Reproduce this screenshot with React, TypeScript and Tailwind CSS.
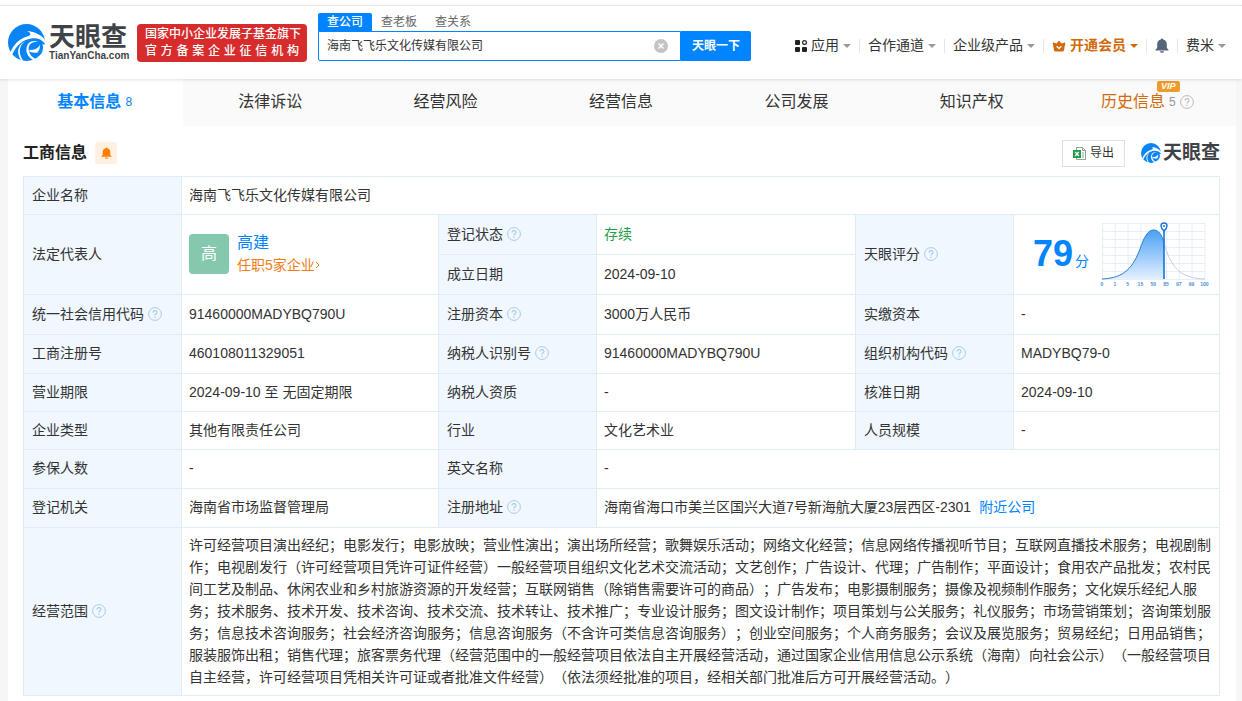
import type { ReactNode } from 'react'
import clsx from 'clsx'

interface NavItem {
  label: string
  icon?: ReactNode
  highlight?: boolean
  caret?: boolean
}

interface TabItem {
  label: string
  count?: number
  vip?: boolean
}

const SCOPE =
  '许可经营项目演出经纪；电影发行；电影放映；营业性演出；演出场所经营；歌舞娱乐活动；网络文化经营；信息网络传播视听节目；互联网直播技术服务；电视剧制作；电视剧发行（许可经营项目凭许可证件经营）一般经营项目组织文化艺术交流活动；文艺创作；广告设计、代理；广告制作；平面设计；食用农产品批发；农村民间工艺及制品、休闲农业和乡村旅游资源的开发经营；互联网销售（除销售需要许可的商品）；广告发布；电影摄制服务；摄像及视频制作服务；文化娱乐经纪人服务；技术服务、技术开发、技术咨询、技术交流、技术转让、技术推广；专业设计服务；图文设计制作；项目策划与公关服务；礼仪服务；市场营销策划；咨询策划服务；信息技术咨询服务；社会经济咨询服务；信息咨询服务（不含许可类信息咨询服务）；创业空间服务；个人商务服务；会议及展览服务；贸易经纪；日用品销售；服装服饰出租；销售代理；旅客票务代理（经营范围中的一般经营项目依法自主开展经营活动，通过国家企业信用信息公示系统（海南）向社会公示）（一般经营项目自主经营，许可经营项目凭相关许可证或者批准文件经营）（依法须经批准的项目，经相关部门批准后方可开展经营活动。）'

const tabs: TabItem[] = [
  { label: '基本信息', count: 8 },
  { label: '法律诉讼' },
  { label: '经营风险' },
  { label: '经营信息' },
  { label: '公司发展' },
  { label: '知识产权' },
  { label: '历史信息', count: 5, vip: true },
]

const Swirl = ({ className }: { className?: string }) => (
  <svg viewBox="0 0 112 112" className={className} aria-hidden="true">
    <circle cx="56" cy="56" r="56" fill="#0a84f5" />
    <path d="M6 88C18 58 38 42 62 36C74 30 64 24 58 22C76 22 98 30 114 50V64C106 48 92 42 74 43C44 46 24 66 11 96Z" fill="#fff" />
    <path d="M52 52C32 64 30 92 48 114L41 112C24 90 28 64 52 52Z" fill="#fff" />
    <path d="M92 54C70 52 60 64 63 80C66 95 76 103 88 107L80 111C62 102 54 88 56 74C58 56 72 46 92 54Z" fill="#fff" />
    <path d="M65 78C80 80 92 74 96 62L114 62L112 74C100 88 82 90 65 84Z" fill="#fff" />
    <path d="M90 53C104 56 110 68 104 80C98 86 94 86 88 86C97 80 100 66 90 53Z" fill="#0a84f5" />
  </svg>
)

const GridIcon = () => (
  <svg viewBox="0 0 12 12" className="size-3" aria-hidden="true">
    <rect x="0" y="0" width="5" height="5" rx="1" fill="#222" />
    <rect x="0" y="7" width="5" height="5" rx="1" fill="#222" />
    <rect x="7" y="7" width="5" height="5" rx="1" fill="#222" />
    <circle cx="9.5" cy="2.5" r="1.9" fill="none" stroke="#222" strokeWidth="1.2" />
  </svg>
)

const CrownIcon = () => (
  <svg viewBox="0 0 14 13" className="h-3 w-3.5" aria-hidden="true">
    <path
      d="M7 0.6L9.6 3.8L13.4 2.6Q14 2.6 13.8 3.4L12.4 11Q12.2 12.4 11 12.4H3Q1.8 12.4 1.6 11L0.2 3.4Q0 2.6 0.6 2.6L4.4 3.8Z"
      fill="#d26a0c"
    />
    <path d="M4.4 6.6L7 9.2L9.6 6.6" fill="none" stroke="#fff" strokeWidth="1.4" />
  </svg>
)

const BellIcon = ({ className }: { className?: string }) => (
  <svg viewBox="0 0 14 15" className={className} fill="currentColor" aria-hidden="true">
    <path d="M7 0.4C7.7 0.4 8.1 0.8 8.2 1.5C10.4 2 11.8 3.8 11.8 6.2V10L13.4 11.6V12.4H0.6V11.6L2.2 10V6.2C2.2 3.8 3.6 2 5.8 1.5C5.9 0.8 6.3 0.4 7 0.4Z" />
    <path d="M5 13.2H9C9 14.2 8 14.8 7 14.8S5 14.2 5 13.2Z" />
  </svg>
)

const HelpIcon = ({ className = 'text-[#a9cbe6]' }: { className?: string }) => (
  <svg viewBox="0 0 14 14" className={clsx('inline-block size-3.5 shrink-0', className)} aria-hidden="true">
    <circle cx="7" cy="7" r="6.4" fill="none" stroke="currentColor" />
    <path
      d="M5 5.6C5 4.3 5.9 3.6 7 3.6S9 4.3 9 5.4C9 6.7 7 6.8 7 8.4"
      fill="none"
      stroke="currentColor"
      strokeWidth="1.1"
    />
    <circle cx="7" cy="10.3" r="0.7" fill="currentColor" />
  </svg>
)

const ExcelIcon = () => (
  <svg viewBox="0 0 13 13" className="size-[13px]" aria-hidden="true">
    <path d="M3.5 0.5H9.5L12.5 3.5V12.5H3.5Z" fill="#fff" stroke="#8fa596" />
    <path d="M9.5 0.5V3.5H12.5M9 6H11M9 8H11M9 10H11" fill="none" stroke="#8fa596" />
    <rect x="0" y="3" width="8" height="8" fill="#1f9d4d" />
    <path d="M2.2 5L5.8 9M5.8 5L2.2 9" stroke="#fff" strokeWidth="1.2" />
  </svg>
)

const Caret = ({ className = 'border-t-[#999]' }: { className?: string }) => (
  <span className={clsx('border-x-4 border-t-4 border-x-transparent', className)} />
)

const ticks = ['0', '1', '5', '15', '50', '85', '97', '99', '100']

const ScoreChart = () => (
  <svg viewBox="0 0 110 66" className="h-[66px] w-[110px]" aria-hidden="true">
    <defs>
      <linearGradient id="scoreFill" x1="0" y1="0" x2="0" y2="1">
        <stop offset="0" stopColor="#4aa0f5" />
        <stop offset="1" stopColor="#e3f0ff" />
      </linearGradient>
    </defs>
    {Array.from({ length: 9 }, (_, i) => (
      <path key={`v${i}`} d={`M${3.5 + i * 12.8} 2V58`} stroke="#e6eef8" />
    ))}
    {Array.from({ length: 8 }, (_, i) => (
      <path key={`h${i}`} d={`M3 ${2.5 + i * 8}H106`} stroke="#e6eef8" />
    ))}
    <path d="M3 58C26 57 34 46 41 28C45 16 49 9 54.500 9C60 9 63 14 65 22V58Z" fill="url(#scoreFill)" />
    <path d="M3 58C26 57 34 46 41 28C45 16 49 9 54.500 9C60 9 63 14 65 22" fill="none" stroke="#2b7fd0" />
    <path d="M65 22C72 46 80 57 106 58" fill="none" stroke="#c6cdd6" />
    <path d="M65 8V58" stroke="#1673d8" strokeWidth="1.6" />
    <path d="M65 10C62.500 7.600 62 6.500 62 5A3 3 0 0 1 68 5C68 6.500 67.500 7.600 65 10Z" fill="#fff" stroke="#1673d8" strokeWidth="1.4" />
    <circle cx="65" cy="5" r="1" fill="#1673d8" />
    {ticks.map((t, i) => (
      <text
        key={t}
        x={3 + i * 12.8}
        y="65"
        textAnchor="middle"
        fontSize="5"
        fontWeight="700"
        fontFamily="Liberation Sans"
        fill="#4d8fd6"
      >
        {t}
      </text>
    ))}
  </svg>
)

const navItems: NavItem[] = [
  { label: '应用', icon: <GridIcon />, caret: true },
  { label: '合作通道', caret: true },
  { label: '企业级产品', caret: true },
  { label: '开通会员', icon: <CrownIcon />, highlight: true, caret: true },
]

const Divider = () => <span className="h-3.5 w-px bg-[#e6e6e6]" />

const Header = () => (
  <header className="relative z-10 flex h-[74px] items-center border-t border-[#e3e3e3] bg-white pr-4 pl-2 shadow-[0_1px_3px_rgba(0,0,0,0.12)]">
    <a href="#home" className="flex shrink-0 items-center gap-1">
      <Swirl className="size-[37px]" />
      <span className="flex w-20 flex-col">
        <span className="text-[26px] leading-[26px] font-bold text-[#3f4347]">天眼查</span>
        <span className="text-[10px] leading-3 font-bold text-[#3f4347]">TianYanCha.com</span>
      </span>
    </a>
    <div className="ml-2 flex h-[38px] w-[170px] shrink-0 flex-col justify-center rounded-sm bg-[#d62c2c] px-2 text-[12px] leading-[17px] font-medium whitespace-nowrap text-white">
      <span className="text-center">国家中小企业发展子基金旗下</span>
      <span className="flex justify-between">
        {[...'官方备案企业征信机构'].map((c) => (
          <span key={c}>{c}</span>
        ))}
      </span>
    </div>
    <form className="ml-[11px] w-[433px] shrink-0 pb-[11px]" onSubmit={(e) => e.preventDefault()}>
      <div className="flex h-[18px] text-[12px] leading-[18px] text-[#666]">
        <button type="button" className="w-[54px] rounded-t-xs bg-[#0084ff] font-medium text-white">
          查公司
        </button>
        <button type="button" className="w-[54px]">查老板</button>
        <button type="button" className="w-[54px]">查关系</button>
      </div>
      <div className="flex h-[30px]">
        <div className="flex flex-1 items-center rounded-bl-xs border border-[#0084ff] pr-3 pl-2">
          <input
            aria-label="搜索公司"
            defaultValue="海南飞飞乐文化传媒有限公司"
            className="min-w-0 flex-1 text-[12px] text-[#333] outline-none"
          />
          <button type="button" aria-label="清空">
            <svg viewBox="0 0 14 14" className="size-3.5">
              <circle cx="7" cy="7" r="7" fill="#c4c4c4" />
              <path d="M4.500 4.500L9.500 9.500M9.500 4.500L4.500 9.500" stroke="#fff" strokeWidth="1.4" />
            </svg>
          </button>
        </div>
        <button type="submit" className="w-[70px] rounded-r-xs bg-[#0084ff] text-[12px] font-bold text-white">
          天眼一下
        </button>
      </div>
    </form>
    <nav className="ml-auto flex items-center gap-2 pt-1.5 text-[14px] text-[#333]">
      {navItems.map((item) => (
        <div key={item.label} className="flex items-center gap-2">
          <a
            href="#nav"
            className={clsx('flex items-center gap-1 whitespace-nowrap', item.highlight && 'font-bold text-[#d26a0c]')}
          >
            {item.icon}
            {item.label}
            {item.caret && <Caret className={item.highlight ? 'border-t-[#d26a0c]' : 'border-t-[#999]'} />}
          </a>
          <Divider />
        </div>
      ))}
      <button type="button" aria-label="消息" className="text-[#55657a]">
        <BellIcon className="h-[15px] w-3.5" />
      </button>
      <Divider />
      <a href="#user" className="flex items-center gap-1 whitespace-nowrap">
        费米
        <Caret />
      </a>
    </nav>
  </header>
)

const Tabs = () => (
  <nav className="flex h-[47px] bg-[#fafafa]">
    {tabs.map((tab, i) => (
      <a
        key={tab.label}
        href="#tab"
        className={clsx(
          'flex flex-1 items-center justify-center gap-1 pr-0.5 pb-0.5 text-[16px]',
          i === 0 ? 'bg-white font-bold text-[#0084ff]' : 'text-[#333]',
          tab.vip && 'text-[#d26a0c]'
        )}
      >
        {tab.label}
        {tab.count && (
          <span className={clsx('relative text-[12px] font-normal', tab.vip && 'text-[#999]')}>
            {tab.count}
            {tab.vip && (
              <span className="absolute -top-3 right-0 -mr-1 rounded-xs bg-[#f09a2b] px-1 text-[9px] leading-[11px] font-bold text-white italic">
                VIP
              </span>
            )}
          </span>
        )}
        {tab.vip && <HelpIcon className="text-[#bbb]" />}
      </a>
    ))}
  </nav>
)

interface CellProps {
  children: ReactNode
  help?: boolean
  rowSpan?: number
  colSpan?: number
}

const Th = ({ children, help, rowSpan }: CellProps) => (
  <th scope="row" rowSpan={rowSpan} className="border border-[#e1edf5] bg-[#f0f7ff] px-2 pb-0.5 text-left font-normal">
    <span className="flex items-center gap-1">
      {children}
      {help && <HelpIcon />}
    </span>
  </th>
)

const Td = ({ children, rowSpan, colSpan }: CellProps) => (
  <td rowSpan={rowSpan} colSpan={colSpan} className="border border-[#e1edf5] pr-1 pb-0.5 pl-[7px]">
    {children}
  </td>
)

const InfoTable = () => (
  <table className="w-full table-fixed border-collapse text-[14px] leading-[22px] text-[#333]">
    <colgroup>
      <col className="w-[158px]" />
      <col />
      <col className="w-[158px]" />
      <col className="w-[259px]" />
      <col className="w-[158px]" />
      <col className="w-[206px]" />
    </colgroup>
    <tbody>
      <tr className="h-[38px]">
        <Th>企业名称</Th>
        <Td colSpan={5}>海南飞飞乐文化传媒有限公司</Td>
      </tr>
      <tr className="h-10">
        <Th rowSpan={2}>法定代表人</Th>
        <Td rowSpan={2}>
          <div className="flex items-center gap-2">
            <span className="flex size-10 items-center justify-center rounded bg-[#84c9ae] text-[16px] text-white">高</span>
            <div className="flex flex-col">
              <a href="#person" className="text-[16px] text-[#0084ff]">高建</a>
              <a href="#companies" className="flex items-center text-[#f07d1a]">
                任职5家企业
                <svg viewBox="0 0 5 8" className="h-2 w-[5px]" aria-hidden="true">
                  <path d="M1 1L4 4L1 7" fill="none" stroke="currentColor" />
                </svg>
              </a>
            </div>
          </div>
        </Td>
        <Th help>登记状态</Th>
        <Td><span className="text-[#1fa04e]">存续</span></Td>
        <Th rowSpan={2} help>天眼评分</Th>
        <Td rowSpan={2}>
          <div className="flex items-center justify-between pr-1.5 pl-3">
            <span className="flex items-baseline gap-0.5 text-[#0084ff]">
              <span className="text-[36px] leading-10 font-bold">79</span>
              <span className="text-[14px]">分</span>
            </span>
            <ScoreChart />
          </div>
        </Td>
      </tr>
      <tr className="h-10">
        <Th>成立日期</Th>
        <Td>2024-09-10</Td>
      </tr>
      <tr className="h-10">
        <Th help>统一社会信用代码</Th>
        <Td>91460000MADYBQ790U</Td>
        <Th help>注册资本</Th>
        <Td>3000万人民币</Td>
        <Th>实缴资本</Th>
        <Td>-</Td>
      </tr>
      <tr className="h-[39px]">
        <Th>工商注册号</Th>
        <Td>460108011329051</Td>
        <Th help>纳税人识别号</Th>
        <Td>91460000MADYBQ790U</Td>
        <Th help>组织机构代码</Th>
        <Td>MADYBQ79-0</Td>
      </tr>
      <tr className="h-[38px]">
        <Th>营业期限</Th>
        <Td>2024-09-10 至 无固定期限</Td>
        <Th>纳税人资质</Th>
        <Td>-</Td>
        <Th>核准日期</Th>
        <Td>2024-09-10</Td>
      </tr>
      <tr className="h-[38px]">
        <Th>企业类型</Th>
        <Td>其他有限责任公司</Td>
        <Th>行业</Th>
        <Td>文化艺术业</Td>
        <Th>人员规模</Th>
        <Td>-</Td>
      </tr>
      <tr className="h-[39px]">
        <Th>参保人数</Th>
        <Td>-</Td>
        <Th>英文名称</Th>
        <Td colSpan={3}>-</Td>
      </tr>
      <tr className="h-[39px]">
        <Th>登记机关</Th>
        <Td>海南省市场监督管理局</Td>
        <Th help>注册地址</Th>
        <Td colSpan={3}>
          海南省海口市美兰区国兴大道7号新海航大厦23层西区-2301
          <a href="#nearby" className="ml-2 text-[#0084ff]">附近公司</a>
        </Td>
      </tr>
      <tr className="h-[168px]">
        <Th help>经营范围</Th>
        <Td colSpan={5}>
          <p className="[text-spacing-trim:space-all]">{SCOPE}</p>
        </Td>
      </tr>
    </tbody>
  </table>
)

export default function App() {
  return (
    <div className="min-h-screen bg-[#f6f6f6] font-['Liberation_Sans','Noto_Sans_CJK_SC',sans-serif]">
      <div className="bg-white pt-[5px]">
        <Header />
      </div>
      <main className="mr-1.5 ml-2 bg-white pb-1.5">
        <Tabs />
        <section className="pr-4 pl-[15px]">
          <div className="flex h-[50px] items-center gap-2 pt-1">
            <h2 className="text-[16px] font-bold text-[#222]">工商信息</h2>
            <button
              type="button"
              aria-label="订阅"
              className="flex size-[22px] items-center justify-center rounded-xs bg-[#fff0e2] text-[#ff7d00]"
            >
              <BellIcon className="h-3 w-[11px]" />
            </button>
            <button
              type="button"
              className="ml-auto flex h-[27px] items-center gap-1 border border-[#e0e0e0] px-2.5 text-[12px] text-[#333]"
            >
              <ExcelIcon />
              导出
            </button>
            <span className="ml-2 flex items-center gap-0.5 text-[19px] font-bold text-[#3f4347]">
              <Swirl className="size-5" />
              天眼查
            </span>
          </div>
          <InfoTable />
        </section>
      </main>
    </div>
  )
}
